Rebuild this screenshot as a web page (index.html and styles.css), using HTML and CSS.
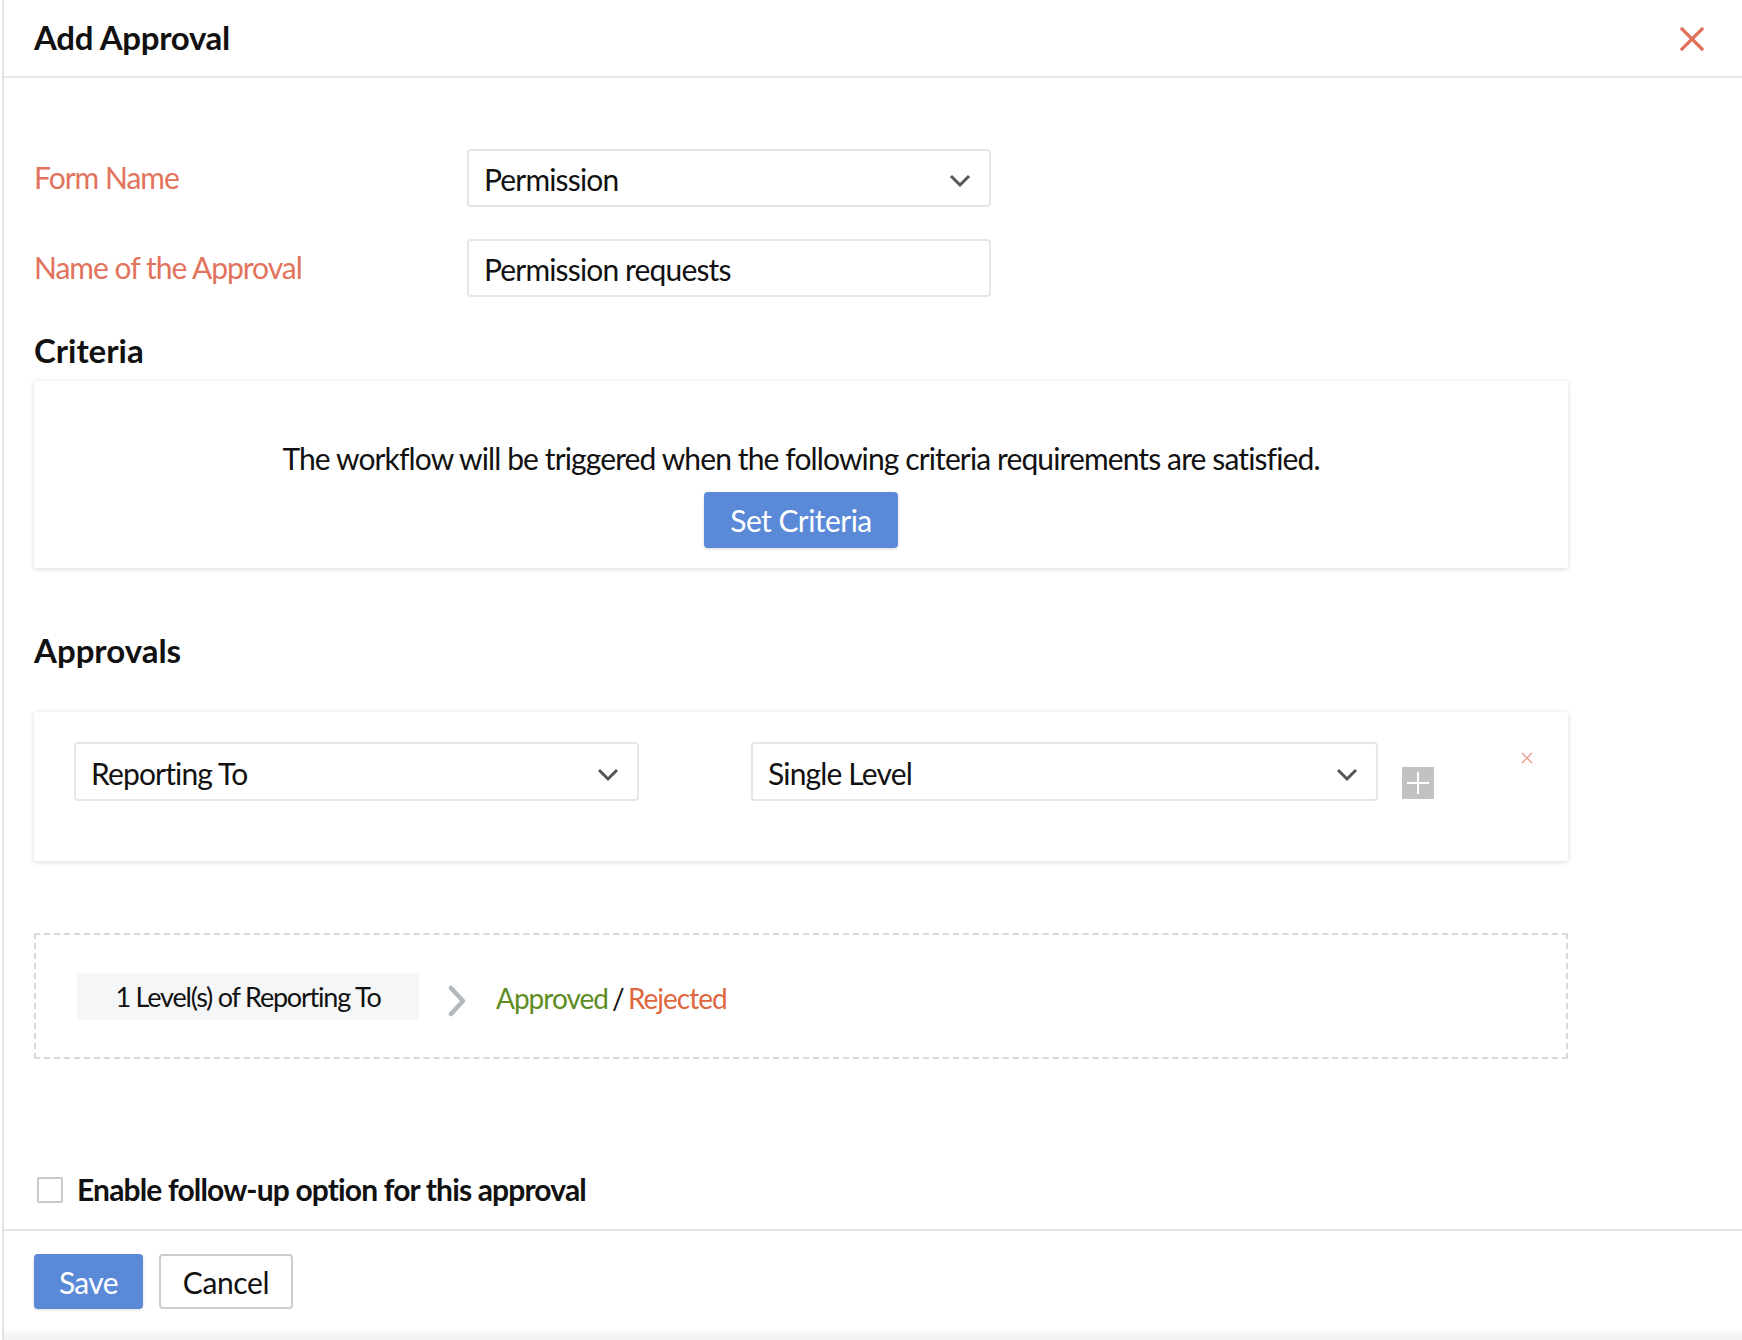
FILE: index.html
```html
<!DOCTYPE html>
<html>
<head>
<meta charset="utf-8">
<link rel="stylesheet" href="styles.css">
</head>
<body>
<div class="panel">
  <div class="header">
    <h1 class="title">Add Approval</h1>
    <button class="close" aria-label="Close">
      <svg width="24" height="24" viewBox="0 0 24 24"><path d="M2 2 L22 22 M22 2 L2 22" stroke="#e0705a" stroke-width="3.2" stroke-linecap="square" fill="none"/></svg>
    </button>
  </div>
  <div class="content">
    <div class="form-grid">
      <label class="field-label">Form Name</label>
      <div class="select wide">
        <span>Permission</span>
        <svg class="chev" width="22" height="14" viewBox="0 0 22 14"><path d="M2 2 L11 11 L20 2" stroke="#555" stroke-width="3" fill="none"/></svg>
      </div>
      <label class="field-label">Name of the Approval</label>
      <div class="select wide"><span>Permission requests</span></div>
    </div>

    <h2 class="section-title criteria-title">Criteria</h2>
    <div class="card criteria-card">
      <p class="criteria-text">The workflow will be triggered when the following criteria requirements are satisfied.</p>
      <button class="btn btn-primary set-criteria">Set Criteria</button>
    </div>

    <h2 class="section-title approvals-title">Approvals</h2>
    <div class="card approvals-card">
      <div class="select sel-approver">
        <span>Reporting To</span>
        <svg class="chev" width="22" height="14" viewBox="0 0 22 14"><path d="M2 2 L11 11 L20 2" stroke="#555" stroke-width="3" fill="none"/></svg>
      </div>
      <div class="select sel-level">
        <span>Single Level</span>
        <svg class="chev" width="22" height="14" viewBox="0 0 22 14"><path d="M2 2 L11 11 L20 2" stroke="#555" stroke-width="3" fill="none"/></svg>
      </div>
      <div class="add-box">
        <svg width="32" height="32" viewBox="0 0 32 32"><path d="M16 5 V27 M5 16 H27" stroke="#fff" stroke-width="2" fill="none"/></svg>
      </div>
      <span class="remove">
        <svg width="12" height="12" viewBox="0 0 12 12"><path d="M1 1 L11 11 M11 1 L1 11" stroke="#f0a193" stroke-width="1.5" fill="none"/></svg>
      </span>
    </div>

    <div class="flow-box">
      <div class="chip">1 Level(s) of Reporting To</div>
      <svg class="flow-arrow" width="20" height="32" viewBox="0 0 20 32"><path d="M4 3 L16 16 L4 29" stroke="#b3b8bf" stroke-width="4.5" stroke-linecap="round" stroke-linejoin="round" fill="none"/></svg>
      <div class="outcome"><span class="approved">Approved</span> / <span class="rejected">Rejected</span></div>
    </div>

    <div class="followup">
      <span class="checkbox"></span>
      <span class="followup-text">Enable follow-up option for this approval</span>
    </div>
  </div>
  <div class="footer">
    <button class="btn btn-primary save">Save</button>
    <button class="btn btn-secondary cancel">Cancel</button>
  </div>
  <div class="bottom-strip"></div>
</div>
</body>
</html>
```

FILE: styles.css
```css
* { box-sizing: border-box; }
html, body {
  margin: 0;
  padding: 0;
  background: #fff;
}
body {
  font-family: Lato, "Open Sans", "Liberation Sans", sans-serif;
  color: #111;
}
.panel {
  margin-left: 2px;
  border-left: 2px solid #e4e4e4;
  height: 1340px;
  display: flex;
  flex-direction: column;
}
.header {
  height: 78px;
  border-bottom: 2px solid #e6e6e6;
  display: flex;
  align-items: center;
  justify-content: space-between;
  padding: 0 38px 0 30px;
}
.title {
  margin: 0;
  font-size: 33px;
  font-weight: 700;
  letter-spacing: -0.3px;
  color: #111;
  position: relative;
  top: -1px;
}
.close {
  border: 0;
  background: none;
  padding: 0;
  display: flex;
  position: relative;
  top: 1px;
}
.content {
  flex: 1;
  padding: 71px 0 19px 30px;
  display: flex;
  flex-direction: column;
}
.form-grid {
  display: grid;
  grid-template-columns: 433px 524px;
  row-gap: 32px;
  align-items: center;
}
.field-label {
  color: #e2735c;
  font-size: 30px;
  letter-spacing: -1px;
  position: relative;
  top: -1px;
}
.select {
  height: 58px;
  border: 2px solid #e6e6e6;
  border-radius: 4px;
  display: flex;
  align-items: center;
  justify-content: space-between;
  padding: 0 18px 0 15px;
  font-size: 30px;
  letter-spacing: -0.85px;
  color: #111;
  background: #fff;
}
.select span { position: relative; top: 1px; }
.chev { flex: none; position: relative; top: 3px; }
.section-title {
  margin: 0;
  font-size: 33px;
  font-weight: 700;
  line-height: 44px;
  color: #111;
}
.criteria-title { margin-top: 31px; }
.approvals-title { margin-top: 60px; }
.card {
  width: 1534px;
  background: #fff;
  box-shadow: 0 1px 5px rgba(0,0,0,0.16);
  border-radius: 2px;
}
.criteria-card {
  margin-top: 9px;
  padding: 57px 0 20px;
  display: flex;
  flex-direction: column;
  align-items: center;
}
.criteria-text {
  margin: 0;
  font-size: 30px;
  letter-spacing: -0.88px;
  line-height: 40px;
}
.btn {
  font-family: inherit;
  font-size: 30px;
  border-radius: 4px;
  cursor: pointer;
}
.btn-primary {
  background: #5a8ad7;
  border: 0;
  color: #fff;
  box-shadow: 0 1px 3px rgba(0,0,0,0.15);
}
.btn-secondary {
  background: #fff;
  border: 2px solid #cdcdcd;
  color: #111;
}
.set-criteria {
  margin-top: 14px;
  width: 194px;
  height: 56px;
  letter-spacing: -0.55px;
}
.approvals-card {
  margin-top: 40px;
  padding: 30px 40px 60px;
  display: flex;
  align-items: flex-start;
  position: relative;
}
.sel-approver { width: 565px; height: 59px; }
.sel-level { width: 627px; height: 59px; margin-left: 112px; }
.add-box {
  width: 32px;
  height: 32px;
  background: #c2c2c2;
  margin-left: 24px;
  margin-top: 25px;
  display: flex;
}
.remove {
  position: absolute;
  top: 40px;
  right: 35px;
  display: flex;
}
.flow-box {
  width: 1534px;
  height: 126px;
  margin-top: 72px;
  border: 2px dashed #d9d9d9;
  display: flex;
  align-items: center;
  padding-left: 41px;
}
.chip {
  width: 342px;
  height: 47px;
  background: #f5f6f8;
  display: flex;
  align-items: center;
  justify-content: center;
  font-size: 27px;
  letter-spacing: -1.2px;
}
.flow-arrow { margin-left: 28px; position: relative; top: 5px; }
.outcome {
  margin-left: 29px;
  font-size: 28px;
  letter-spacing: -1px;
  word-spacing: -2px;
  position: relative;
  top: 2px;
}
.approved { color: #5e8c23; }
.rejected { color: #e0663f; }
.followup {
  margin-top: auto;
  display: flex;
  align-items: center;
  height: 40px;
}
.checkbox {
  width: 26px;
  height: 26px;
  border: 2px solid #c9c9c9;
  border-radius: 2px;
  margin-left: 3px;
  background: #fff;
}
.followup-text {
  margin-left: 14px;
  font-size: 30px;
  font-weight: 700;
  letter-spacing: -0.85px;
  position: relative;
  top: -1px;
}
.footer {
  border-top: 2px solid #e6e6e6;
  padding: 23px 0 21px 30px;
  display: flex;
  gap: 16px;
}
.save { width: 109px; height: 55px; letter-spacing: -0.6px; }
.cancel { width: 134px; height: 55px; letter-spacing: -0.4px; }
.bottom-strip {
  height: 10px;
  background: linear-gradient(#fafafa, #f2f2f2);
}
```
